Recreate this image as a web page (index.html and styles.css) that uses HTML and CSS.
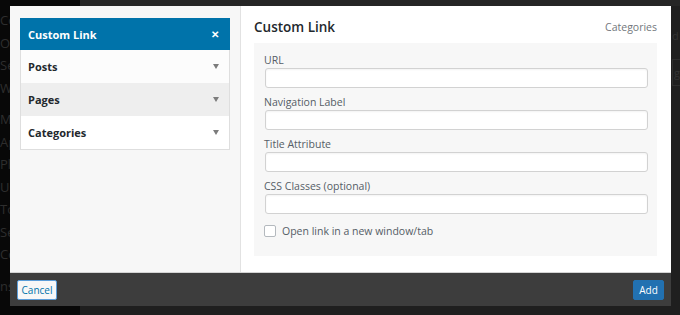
FILE: index.html
```html
<!DOCTYPE html>
<html lang="en">
<head>
  <meta charset="UTF-8" />
  <title>Add Menu Item</title>
  <link rel="stylesheet" href="styles.css">
</head>
<body>
  <div class="admin">
    <nav class="admin-menu">
      <span>Co</span>
      <span>Op</span>
      <span>Se</span>
      <span>Wh</span>
      <span class="gap">Me</span>
      <span>Ap</span>
      <span>Plu</span>
      <span>Us</span>
      <span>To</span>
      <span>Se</span>
      <span>Co</span>
      <span class="gap">ns</span>
    </nav>
    <main class="admin-main">
      <div class="ghost-row">d</div>
      <div class="ghost-row boxed">g</div>
    </main>
  </div>

  <div class="modal">
    <div class="modal-body">
      <aside class="modal-side">
        <div class="accordion">
          <div class="acc-item active">
            <span>Custom Link</span>
            <span class="close">&#x2715;</span>
          </div>
          <div class="acc-item">
            <span>Posts</span>
            <span class="arrow"></span>
          </div>
          <div class="acc-item hover">
            <span>Pages</span>
            <span class="arrow"></span>
          </div>
          <div class="acc-item white">
            <span>Categories</span>
            <span class="arrow"></span>
          </div>
        </div>
      </aside>

      <section class="modal-main">
        <div class="main-head">
          <h2>Custom Link</h2>
          <span class="crumb">Categories</span>
        </div>
        <form class="link-form">
          <div class="field">
            <label>URL</label>
            <input type="text" />
          </div>
          <div class="field">
            <label>Navigation Label</label>
            <input type="text" />
          </div>
          <div class="field">
            <label>Title Attribute</label>
            <input type="text" />
          </div>
          <div class="field">
            <label>CSS Classes (optional)</label>
            <input type="text" />
          </div>
          <label class="check">
            <span class="box"></span>
            Open link in a new window/tab
          </label>
        </form>
      </section>
    </div>

    <footer class="modal-footer">
      <button class="btn btn-secondary">Cancel</button>
      <button class="btn btn-primary">Add</button>
    </footer>
  </div>
</body>
</html>
```

FILE: styles.css
```css
html, body {
  margin: 0;
  height: 100%;
  overflow: hidden;
  font-family: 'Open Sans', 'Noto Sans', sans-serif;
}

body {
  position: relative;
  background: #1f1f1f;
}

/* dimmed admin screen behind the modal */
.admin {
  display: flex;
  height: 100%;
}

.admin-menu {
  width: 80px;
  background: #080808;
  display: flex;
  flex-direction: column;
  padding-top: 9px;
  box-sizing: border-box;
}

.admin-menu span {
  color: #2e2e2e;
  font-size: 13px;
  line-height: 22.5px;
  white-space: nowrap;
  width: 10px;
  overflow: hidden;
}

.admin-menu .gap { margin-top: 9px; }

.admin-main {
  flex: 1;
  padding: 22px 0 0 592px;
  box-sizing: border-box;
  border-top: 6px solid #262626;
  overflow: hidden;
}

.ghost-row {
  color: #333;
  font-size: 11px;
  width: 8px;
  overflow: hidden;
  margin-bottom: 16px;
}

.ghost-row.boxed {
  border: 1px solid #2e2e2e;
  border-right: 0;
  padding: 5px 0 5px 1px;
}

/* modal */
.modal {
  position: absolute;
  left: 10px;
  top: 6px;
  width: 661px;
  height: 300px;
  display: flex;
  flex-direction: column;
  background: #fff;
}

.modal-body {
  flex: 1;
  display: flex;
  min-height: 0;
}

.modal-side {
  width: 231px;
  background: #f7f7f7;
  border-right: 1px solid #e2e2e2;
  padding: 12px 10px 0;
  box-sizing: border-box;
}

.accordion {
  border: 1px solid #dedede;
  border-top: 0;
  background: #fff;
}

.acc-item {
  height: 33px;
  display: flex;
  align-items: center;
  justify-content: space-between;
  padding: 0 10px 0 7px;
  font-size: 11px;
  font-weight: 700;
  color: #23282d;
  background: #fcfcfc;
  box-sizing: border-box;
}

.acc-item.active {
  height: 32px;
  background: #0073aa;
  color: #fff;
  margin: 0 -1px;
  padding-left: 8px;
  padding-right: 11px;
}

.acc-item.hover { background: #eeeeee; }
.acc-item.white { background: #fff; }

.close {
  font-size: 10px;
  font-weight: 700;
}

.arrow {
  width: 0;
  height: 0;
  border-left: 3.5px solid transparent;
  border-right: 3.5px solid transparent;
  border-top: 5px solid #7c7c7c;
}

.modal-main {
  flex: 1;
  padding: 12px 14px 0 13px;
}

.main-head {
  display: flex;
  justify-content: space-between;
  align-items: center;
  height: 18px;
  margin-bottom: 7px;
}

.main-head h2 {
  margin: 0;
  font-size: 13.5px;
  font-weight: 600;
  color: #23282d;
}

.crumb {
  font-size: 10.5px;
  color: #72777c;
}

.link-form {
  background: #f7f7f7;
  padding: 10px 9px 18px 10px;
}

.field {
  display: flex;
  flex-direction: column;
  margin-bottom: 7px;
}

.field label {
  font-size: 10.5px;
  line-height: 15px;
  color: #555d66;
}

.field input {
  height: 20px;
  margin: 0 0 0 1px;
  padding: 0 6px;
  border: 1px solid #d2d2d2;
  border-radius: 3px;
  background: #fff;
  box-shadow: inset 0 1px 2px rgba(0, 0, 0, 0.05);
  box-sizing: border-box;
}

.check {
  display: flex;
  align-items: center;
  gap: 6px;
  margin-top: 10px;
  font-size: 10.5px;
  color: #555d66;
}

.check .box {
  width: 10px;
  height: 10px;
  border: 1px solid #b4b9be;
  border-radius: 2px;
  background: #fff;
}

.modal-footer {
  height: 34px;
  background: #3d3d3d;
  border-top: 1px solid #d4d4d4;
  display: flex;
  align-items: center;
  justify-content: space-between;
  padding: 0 7px;
  box-sizing: border-box;
}

.btn {
  height: 20px;
  padding: 0 8px;
  font-family: inherit;
  font-size: 10px;
  border-radius: 2px;
  line-height: 18px;
}

.btn-secondary {
  width: 40px;
  padding: 0;
  background: #f7f7f7;
  color: #0073aa;
  border: 1px solid #5b9dd9;
}

.btn-primary {
  width: 31px;
  padding: 0;
  background: #2271b1;
  color: #fff;
  border: 1px solid #2271b1;
}
```
